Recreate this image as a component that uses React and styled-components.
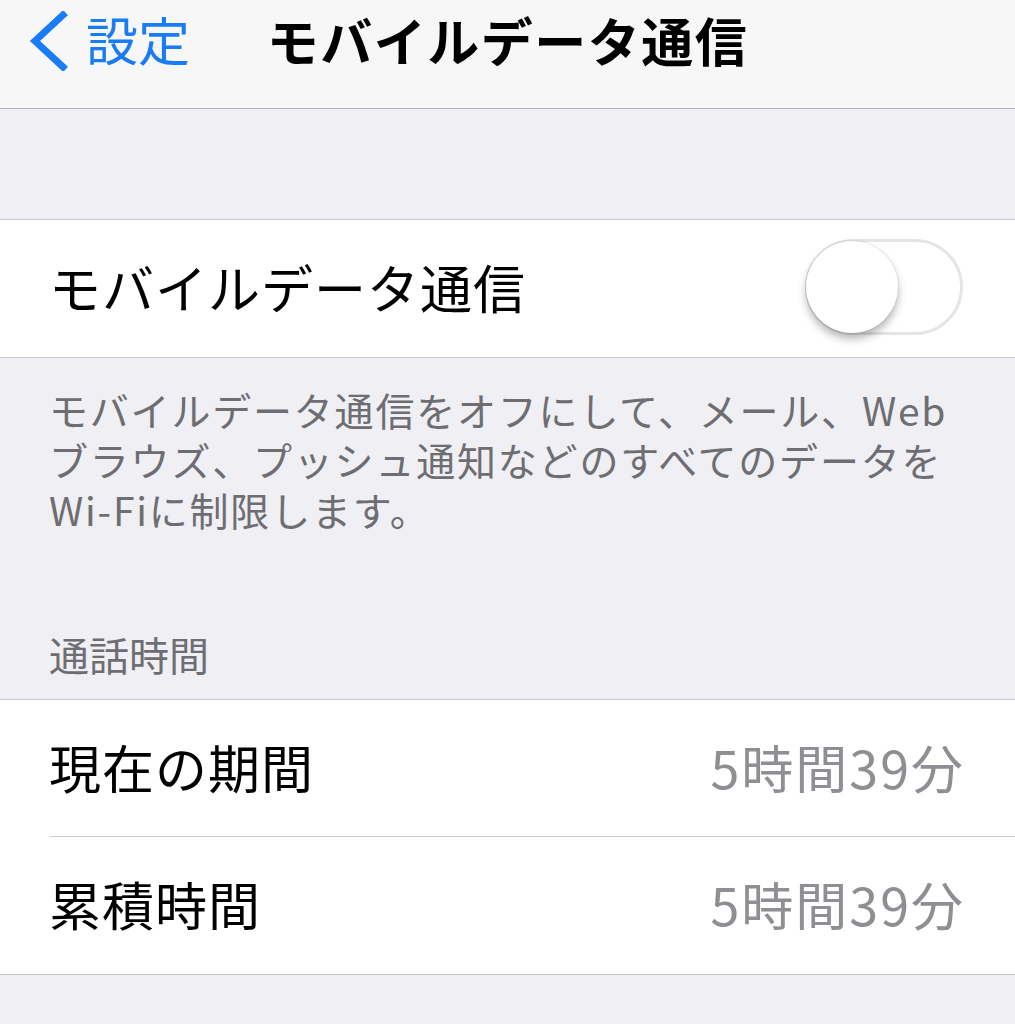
import React from "react";
import styled, { createGlobalStyle } from "styled-components";

const GlobalStyle = createGlobalStyle`
  html, body {
    margin: 0;
    padding: 0;
    background: #efeff4;
  }
  body {
    font-family: "Noto Sans CJK JP", "Noto Sans", "Liberation Sans", sans-serif;
    -webkit-font-smoothing: antialiased;
  }
`;

const App = () => {
  return (
    <>
      <GlobalStyle />
      <Page__div>
        <NavBar__header>
          <BackButton__a>
            <svg width="42" height="60" viewBox="0 0 42 60">
              <path
                d="M37 4 L9 30 L37 56"
                fill="none"
                stroke="#1a7cf5"
                strokeWidth="7"
                strokeLinecap="square"
                strokeLinejoin="miter"
              />
            </svg>
            <span>設定</span>
          </BackButton__a>
          <NavTitle__h1>モバイルデータ通信</NavTitle__h1>
          <span />
        </NavBar__header>

        <Spacer__div height={110} />

        <Group__section>
          <Row__div>
            <RowLabel__span>モバイルデータ通信</RowLabel__span>
            <Switch__div>
              <SwitchKnob__span />
            </Switch__div>
          </Row__div>
        </Group__section>

        <Footer__div>
          <FooterLine__span>モバイルデータ通信をオフにして、メール、Web</FooterLine__span>
          <FooterLine__span>ブラウズ、プッシュ通知などのすべてのデータを</FooterLine__span>
          <FooterLine__span>Wi-Fiに制限します。</FooterLine__span>
        </Footer__div>

        <SectionHeader__h2>通話時間</SectionHeader__h2>

        <Group__section>
          <Row__div divider>
            <RowLabel__span>現在の期間</RowLabel__span>
            <RowValue__span>5時間39分</RowValue__span>
          </Row__div>
          <Row__div>
            <RowLabel__span>累積時間</RowLabel__span>
            <RowValue__span>5時間39分</RowValue__span>
          </Row__div>
        </Group__section>

        <Spacer__div height={47} />
      </Page__div>
    </>
  );
};

export default App;

const Page__div = styled.div`
  width: 1015px;
  min-height: 1024px;
  background: #efeff4;
  overflow: hidden;
`;

const NavBar__header = styled.header`
  height: 109px;
  box-sizing: border-box;
  display: grid;
  grid-template-columns: 1fr auto 1fr;
  align-items: start;
  padding: 11px 0 0 0;
  background: #f7f7f8;
  border-bottom: 1px solid #b4b4b8;
`;

const BackButton__a = styled.a`
  display: flex;
  align-items: center;
  gap: 18px;
  padding-left: 26px;
  color: #1a7cf5;
  font-size: 52px;
  line-height: 60px;

  span {
    margin-top: -4px;
  }
`;

const NavTitle__h1 = styled.h1`
  margin: 0;
  font-size: 52px;
  font-weight: 700;
  line-height: 58px;
  color: #000;
  letter-spacing: 1.5px;
`;

const Spacer__div = styled.div`
  height: ${(p) => p.height}px;
`;

const Group__section = styled.section`
  background: #fff;
  border-top: 1px solid #c8c7cc;
  border-bottom: 1px solid #c8c7cc;
`;

const Row__div = styled.div`
  position: relative;
  height: 137px;
  display: flex;
  align-items: center;
  justify-content: space-between;
  padding: 0 52px 0 49px;

  ${(p) =>
    p.divider &&
    `
    &::after {
      content: "";
      position: absolute;
      left: 50px;
      right: 0;
      bottom: 0;
      height: 1px;
      background: #c8c7cc;
    }
  `}
`;

const RowLabel__span = styled.span`
  font-size: 52px;
  line-height: 60px;
  color: #000;
  margin-top: -4px;
  letter-spacing: 1px;
`;

const RowValue__span = styled.span`
  font-size: 52px;
  line-height: 60px;
  color: #8e8e93;
  margin-top: -4px;
  letter-spacing: 2px;
  margin-right: -2px;
`;

const Switch__div = styled.div`
  width: 158px;
  height: 96px;
  box-sizing: border-box;
  border: 3px solid #e5e5e8;
  border-radius: 48px;
  background: #fff;
  display: flex;
  align-items: center;
  margin-top: -4px;
`;

const SwitchKnob__span = styled.span`
  width: 92px;
  height: 92px;
  margin-left: -2px;
  border-radius: 50%;
  background: #fff;
  box-shadow: 0 6px 9px rgba(0, 0, 0, 0.28), 0 0 0 1px rgba(0, 0, 0, 0.06);
`;

const Footer__div = styled.div`
  display: flex;
  flex-direction: column;
  padding: 26px 20px 0 49px;
`;

const FooterLine__span = styled.span`
  display: block;
  height: 50px;
  font-size: 39px;
  line-height: 50px;
  color: #6d6d72;
  letter-spacing: 1.8px;
  white-space: nowrap;
`;

const SectionHeader__h2 = styled.h2`
  margin: 0;
  padding: 95px 49px 20px;
  font-size: 40px;
  font-weight: 400;
  line-height: 50px;
  color: #6d6d72;
`;
